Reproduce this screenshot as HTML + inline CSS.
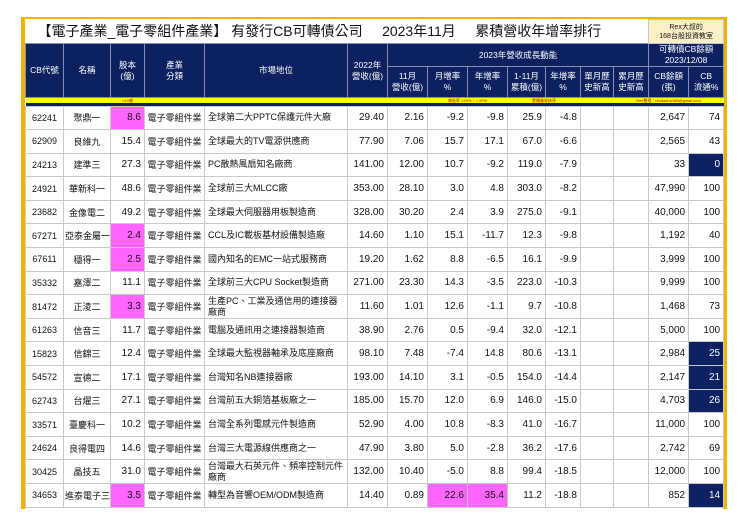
<!DOCTYPE html>
<html><head><meta charset="utf-8"><style>
*{margin:0;padding:0;box-sizing:border-box}
body{width:740px;height:523px;background:#fff;position:relative;overflow:hidden;font-family:"Liberation Sans","Noto Sans CJK TC",sans-serif}
#f{position:absolute;left:21px;top:17px;width:706px;height:492px;border-left:4px solid #f0b400;border-right:4px solid #f0b400;border-top:2px solid #f0b400}
table{position:absolute;left:25px;top:19px;border-collapse:collapse;table-layout:fixed;width:698px}
td{border:1px solid #c8c8c8;font-size:9px;color:#111;padding:0 2px;white-space:nowrap;overflow:hidden}
.h td{background:#0d2060;color:#fff;text-align:center;border-color:#8090b0;font-size:8.5px;line-height:11px;padding:0}
.t td{height:24px}
.y td{background:#ffff00;height:5px;font-size:4px;line-height:5px;color:#a00;border:none;padding:0;text-align:center}
.d td{height:23.6px;text-align:right;padding:0 3px;font-size:10px}
.d td.c{text-align:center;padding:0 1px;font-size:9px}
.d td.l{text-align:left;white-space:normal;line-height:11px;font-size:9px}
.p{background:#ff66ff}
.n{background:#0d2060;color:#fff!important}
</style></head><body>
<div id="f"></div>
<table>
<colgroup><col style="width:38px"><col style="width:47px"><col style="width:34px"><col style="width:60px"><col style="width:143px"><col style="width:40px"><col style="width:40px"><col style="width:40px"><col style="width:40px"><col style="width:38px"><col style="width:35px"><col style="width:33px"><col style="width:35px"><col style="width:40px"><col style="width:35px"></colgroup>
<tr class="t"><td colspan="13" style="font-size:14px;border:none;padding-left:12px;white-space:pre">【電子產業_電子零組件產業】 有發行CB可轉債公司     2023年11月     累積營收年增率排行</td><td colspan="2" style="background:#fdf0c8;font-size:7px;text-align:center;line-height:9px">Rex大叔的<br>168台股投資教室</td></tr>
<tr class="h" style="height:23px"><td rowspan="2">CB代號</td><td rowspan="2">名稱</td><td rowspan="2">股本<br>(億)</td><td rowspan="2">產業<br>分類</td><td rowspan="2">市場地位</td><td rowspan="2">2022年<br>營收(億)</td><td colspan="7">2023年營收成長動能</td><td colspan="2">可轉債CB餘額<br>2023/12/08</td></tr>
<tr class="h" style="height:31px"><td>11月<br>營收(億)</td><td>月增率<br>%</td><td>年增率<br>%</td><td>1-11月<br>累積(億)</td><td>年增率<br>%</td><td>單月歷<br>史新高</td><td>累月歷<br>史新高</td><td>CB餘額<br>(張)</td><td>CB<br>流通%</td></tr>
<tr class="y"><td></td><td></td><td>&lt;10億</td><td></td><td></td><td></td><td></td><td colspan="2">增長率 &gt;20%；&lt;-20%</td><td colspan="2">累積營收排序</td><td></td><td colspan="3">Rex整理：rexdashu168@gmail.com</td></tr>
<tr><td colspan="15" style="height:3px;background:#0d2060;border:none;padding:0"></td></tr>
<tr class="d"><td class="c">62241</td><td class="c">聚鼎一</td><td class="p">8.6</td><td class="c">電子零組件業</td><td class="l">全球第二大PPTC保護元件大廠</td><td>29.40</td><td>2.16</td><td>-9.2</td><td>-9.8</td><td>25.9</td><td>-4.8</td><td></td><td></td><td>2,647</td><td>74</td></tr>
<tr class="d"><td class="c">62909</td><td class="c">良維九</td><td>15.4</td><td class="c">電子零組件業</td><td class="l">全球最大的TV電源供應商</td><td>77.90</td><td>7.06</td><td>15.7</td><td>17.1</td><td>67.0</td><td>-6.6</td><td></td><td></td><td>2,565</td><td>43</td></tr>
<tr class="d"><td class="c">24213</td><td class="c">建準三</td><td>27.3</td><td class="c">電子零組件業</td><td class="l">PC散熱風扇知名廠商</td><td>141.00</td><td>12.00</td><td>10.7</td><td>-9.2</td><td>119.0</td><td>-7.9</td><td></td><td></td><td>33</td><td class="n">0</td></tr>
<tr class="d"><td class="c">24921</td><td class="c">華新科一</td><td>48.6</td><td class="c">電子零組件業</td><td class="l">全球前三大MLCC廠</td><td>353.00</td><td>28.10</td><td>3.0</td><td>4.8</td><td>303.0</td><td>-8.2</td><td></td><td></td><td>47,990</td><td>100</td></tr>
<tr class="d"><td class="c">23682</td><td class="c">金像電二</td><td>49.2</td><td class="c">電子零組件業</td><td class="l">全球最大伺服器用板製造商</td><td>328.00</td><td>30.20</td><td>2.4</td><td>3.9</td><td>275.0</td><td>-9.1</td><td></td><td></td><td>40,000</td><td>100</td></tr>
<tr class="d"><td class="c">67271</td><td class="c">亞泰金屬一</td><td class="p">2.4</td><td class="c">電子零組件業</td><td class="l">CCL及IC載板基材設備製造廠</td><td>14.60</td><td>1.10</td><td>15.1</td><td>-11.7</td><td>12.3</td><td>-9.8</td><td></td><td></td><td>1,192</td><td>40</td></tr>
<tr class="d"><td class="c">67611</td><td class="c">穩得一</td><td class="p">2.5</td><td class="c">電子零組件業</td><td class="l">國內知名的EMC一站式服務商</td><td>19.20</td><td>1.62</td><td>8.8</td><td>-6.5</td><td>16.1</td><td>-9.9</td><td></td><td></td><td>3,999</td><td>100</td></tr>
<tr class="d"><td class="c">35332</td><td class="c">嘉澤二</td><td>11.1</td><td class="c">電子零組件業</td><td class="l">全球前三大CPU Socket製造商</td><td>271.00</td><td>23.30</td><td>14.3</td><td>-3.5</td><td>223.0</td><td>-10.3</td><td></td><td></td><td>9,999</td><td>100</td></tr>
<tr class="d"><td class="c">81472</td><td class="c">正淩二</td><td class="p">3.3</td><td class="c">電子零組件業</td><td class="l">生產PC、工業及通信用的連接器廠商</td><td>11.60</td><td>1.01</td><td>12.6</td><td>-1.1</td><td>9.7</td><td>-10.8</td><td></td><td></td><td>1,468</td><td>73</td></tr>
<tr class="d"><td class="c">61263</td><td class="c">信音三</td><td>11.7</td><td class="c">電子零組件業</td><td class="l">電腦及通訊用之連接器製造商</td><td>38.90</td><td>2.76</td><td>0.5</td><td>-9.4</td><td>32.0</td><td>-12.1</td><td></td><td></td><td>5,000</td><td>100</td></tr>
<tr class="d"><td class="c">15823</td><td class="c">信錦三</td><td>12.4</td><td class="c">電子零組件業</td><td class="l">全球最大監視器軸承及底座廠商</td><td>98.10</td><td>7.48</td><td>-7.4</td><td>14.8</td><td>80.6</td><td>-13.1</td><td></td><td></td><td>2,984</td><td class="n">25</td></tr>
<tr class="d"><td class="c">54572</td><td class="c">宣德二</td><td>17.1</td><td class="c">電子零組件業</td><td class="l">台灣知名NB連接器廠</td><td>193.00</td><td>14.10</td><td>3.1</td><td>-0.5</td><td>154.0</td><td>-14.4</td><td></td><td></td><td>2,147</td><td class="n">21</td></tr>
<tr class="d"><td class="c">62743</td><td class="c">台燿三</td><td>27.1</td><td class="c">電子零組件業</td><td class="l">台灣前五大銅箔基板廠之一</td><td>185.00</td><td>15.70</td><td>12.0</td><td>6.9</td><td>146.0</td><td>-15.0</td><td></td><td></td><td>4,703</td><td class="n">26</td></tr>
<tr class="d"><td class="c">33571</td><td class="c">臺慶科一</td><td>10.2</td><td class="c">電子零組件業</td><td class="l">台灣全系列電感元件製造商</td><td>52.90</td><td>4.00</td><td>10.8</td><td>-8.3</td><td>41.0</td><td>-16.7</td><td></td><td></td><td>11,000</td><td>100</td></tr>
<tr class="d"><td class="c">24624</td><td class="c">良得電四</td><td>14.6</td><td class="c">電子零組件業</td><td class="l">台灣三大電源線供應商之一</td><td>47.90</td><td>3.80</td><td>5.0</td><td>-2.8</td><td>36.2</td><td>-17.6</td><td></td><td></td><td>2,742</td><td>69</td></tr>
<tr class="d"><td class="c">30425</td><td class="c">晶技五</td><td>31.0</td><td class="c">電子零組件業</td><td class="l">台灣最大石英元件、頻率控制元件廠商</td><td>132.00</td><td>10.40</td><td>-5.0</td><td>8.8</td><td>99.4</td><td>-18.5</td><td></td><td></td><td>12,000</td><td>100</td></tr>
<tr class="d"><td class="c">34653</td><td class="c">進泰電子三</td><td class="p">3.5</td><td class="c">電子零組件業</td><td class="l">轉型為音響OEM/ODM製造商</td><td>14.40</td><td>0.89</td><td class="p">22.6</td><td class="p">35.4</td><td>11.2</td><td>-18.8</td><td></td><td></td><td>852</td><td class="n">14</td></tr>
</table>
</body></html>
